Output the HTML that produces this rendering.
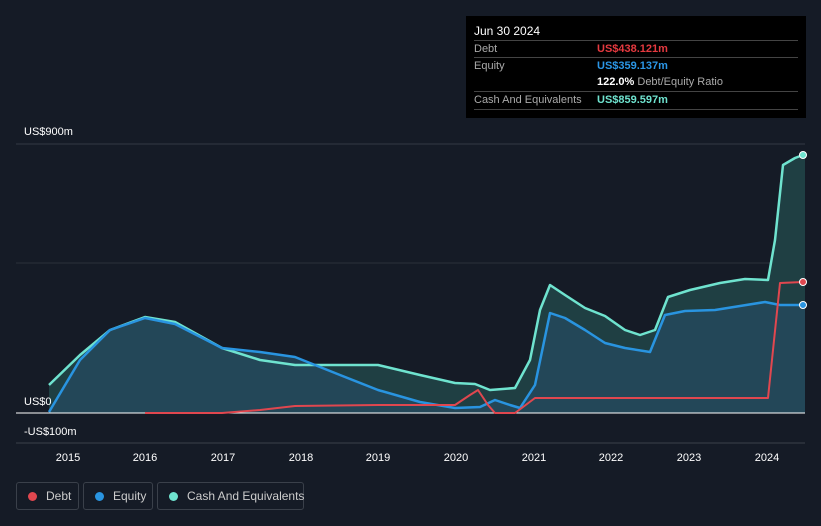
<!DOCTYPE html><html><head><style>
html,body{margin:0;background:#151b26;font-family:"Liberation Sans",sans-serif;width:821px;height:526px;overflow:hidden;position:relative}
.t{position:absolute;left:466px;top:16px;width:340px;height:102px;background:#000;color:#fff;font-size:11px}
.r{position:absolute;left:8px;width:324px;border-top:1px solid #444;height:17px;line-height:17px}
.l{color:#aaa}
.v{position:absolute;left:123px;top:0;font-weight:bold}
.lg{position:absolute;top:482px;height:28px;border:1px solid #3a404a;border-radius:3px;color:#ccc;font-size:12px;line-height:26px;box-sizing:border-box;white-space:nowrap}
.d{display:inline-block;width:9px;height:9px;border-radius:50%;margin:0 9px 0 11px;vertical-align:-1px}
</style></head><body>
<svg width="821" height="526" style="position:absolute;left:0;top:0">
<line x1="16" y1="144" x2="805" y2="144" stroke="#333a44"/>
<line x1="16" y1="263" x2="805" y2="263" stroke="#2a303a"/>
<line x1="16" y1="443" x2="805" y2="443" stroke="#3a404a"/>
<path d="M49,385 L80,355 L110,330 L145,317 L175,322 L222,348 L260,360 L295,365 L378,365 L420,375 L455,383 L475,384 L490,390 L515,388 L530,360 L540,310 L550,285 L565,295 L585,308 L605,316 L625,330 L640,335 L655,330 L668,297 L690,290 L720,283 L745,279 L768,280 L775,240 L783,165 L795,158 L803,155 L805,155 L805,413 L49,413Z" fill="#1f3f43"/>
<path d="M49,412 L80,360 L110,330 L145,318 L175,324 L222,348 L260,352 L295,357 L340,375 L378,390 L420,402 L455,408 L480,407 L495,400 L510,405 L520,408 L535,385 L550,313 L565,318 L585,330 L605,343 L625,348 L650,352 L665,315 L685,311 L715,310 L740,306 L765,302 L780,305 L803,305 L805,305 L805,413 L49,413Z" fill="#244a5e" opacity=".8"/>
<path d="M49,385 L80,355 L110,330 L145,317 L175,322 L222,348 L260,360 L295,365 L378,365 L420,375 L455,383 L475,384 L490,390 L515,388 L530,360 L540,310 L550,285 L565,295 L585,308 L605,316 L625,330 L640,335 L655,330 L668,297 L690,290 L720,283 L745,279 L768,280 L775,240 L783,165 L795,158 L803,155" fill="none" stroke="#6fe3cf" stroke-width="2.5" stroke-linejoin="round"/>
<path d="M49,412 L80,360 L110,330 L145,318 L175,324 L222,348 L260,352 L295,357 L340,375 L378,390 L420,402 L455,408 L480,407 L495,400 L510,405 L520,408 L535,385 L550,313 L565,318 L585,330 L605,343 L625,348 L650,352 L665,315 L685,311 L715,310 L740,306 L765,302 L780,305 L803,305" fill="none" stroke="#2994e0" stroke-width="2.5" stroke-linejoin="round"/>
<line x1="16" y1="413" x2="805" y2="413" stroke="#fff" stroke-width="1"/>
<path d="M145,413 L222,413 L260,410 L295,406 L378,405 L455,405 L470,395 L478,390 L488,405 L495,413 L515,413 L535,398 L600,398 L690,398 L768,398 L780,283 L803,282" fill="none" stroke="#e0474f" stroke-width="2" stroke-linejoin="round"/>
<circle cx="803" cy="155" r="3.5" fill="#6fe3cf" stroke="#fff"/>
<circle cx="803" cy="282" r="3.5" fill="#e0474f" stroke="#fff"/>
<circle cx="803" cy="305" r="3.5" fill="#2994e0" stroke="#fff"/>
<g fill="#fff" font-size="11" text-anchor="middle">
<text x="68" y="461">2015</text><text x="145" y="461">2016</text><text x="223" y="461">2017</text><text x="301" y="461">2018</text><text x="378" y="461">2019</text><text x="456" y="461">2020</text><text x="534" y="461">2021</text><text x="611" y="461">2022</text><text x="689" y="461">2023</text><text x="767" y="461">2024</text>
</g>
<g fill="#fff" font-size="11"><text x="24" y="135">US$900m</text><text x="24" y="405">US$0</text><text x="24" y="435">-US$100m</text></g>
</svg>
<div class="t">
<div style="position:absolute;left:8px;top:8px;font-size:12px">Jun 30 2024</div>
<div class="r" style="top:24px"><span class="l">Debt</span><span class="v" style="color:#e5393f">US$438.121m</span></div>
<div class="r" style="top:41px"><span class="l">Equity</span><span class="v" style="color:#2b96e6">US$359.137m</span></div>
<div class="r" style="top:58px;border:0"><span class="v"><b>122.0%</b> <span style="color:#aaa;font-weight:normal">Debt/Equity Ratio</span></span></div>
<div class="r" style="top:75px"><span class="l">Cash And Equivalents</span><span class="v" style="color:#6fe3cf">US$859.597m</span></div>
<div class="r" style="top:93px;height:0"></div>
</div>
<div class="lg" style="left:16px;width:63px"><span class="d" style="background:#e0474f"></span>Debt</div>
<div class="lg" style="left:83px;width:70px"><span class="d" style="background:#2994e0"></span>Equity</div>
<div class="lg" style="left:157px;width:147px"><span class="d" style="background:#6fe3cf"></span>Cash And Equivalents</div>
</body></html>
